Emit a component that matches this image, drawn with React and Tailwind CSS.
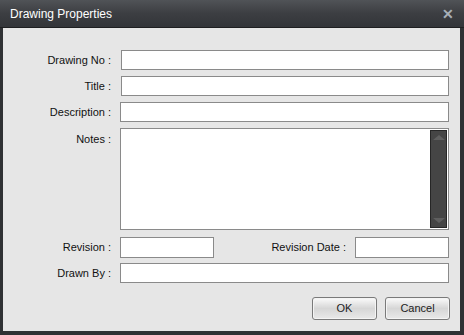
import React from 'react';

const font = { fontFamily: '"Liberation Sans", Arial, sans-serif' };

function Field({ className = '' }) {
  return <div className={`h-[20px] bg-white border border-[#8a8a8a] ${className}`} />;
}

function Label({ children, className = '' }) {
  return <div className={`w-[117px] pr-[9px] text-right text-[11px] text-[#111] ${className}`}>{children}</div>;
}

function Btn({ children }) {
  return (
    <button className="w-[65px] h-[23px] rounded-[3px] border border-[#7a7a7a] bg-gradient-to-b from-[#fbfbfb] via-[#d6d6d6] to-[#e9e9e9] text-[11px] text-[#222] shadow-[inset_0_0_0_1px_#f4f4f4]">
      {children}
    </button>
  );
}

export default function App() {
  return (
    <div className="w-[464px] h-[335px] flex flex-col bg-[#2f3134]" style={font}>
      {/* title bar */}
      <div className="h-[28px] shrink-0 flex items-center justify-between pl-[10px] pr-[10px] bg-gradient-to-b from-[#505357] via-[#3c3e42] to-[#333539] border-b border-[#1e1f21]">
        <span className="text-[12px] text-white pt-[1px]">Drawing Properties</span>
        <span className="text-[14px] font-bold text-[#a7afb6] leading-none">✕</span>
      </div>

      {/* body */}
      <div className="flex-1 ml-[3px] mr-[4px] mb-[4px] bg-[#e6e6e6] flex flex-col pt-[22px]">
        <div className="flex items-center">
          <Label>Drawing No :</Label>
          <Field className="w-[328px] ml-[1px]" />
        </div>
        <div className="flex items-center mt-[6px]">
          <Label>Title :</Label>
          <Field className="w-[328px] ml-[1px]" />
        </div>
        <div className="flex items-center mt-[6px]">
          <Label>Description :</Label>
          <Field className="w-[329px]" />
        </div>
        <div className="flex items-start mt-[6px]">
          <Label className="pt-[3px]">Notes :</Label>
          <div className="w-[329px] h-[102px] bg-white border border-[#8a8a8a] flex justify-end p-[1px]">
            <div className="w-[17px] h-full bg-[#454545] border border-[#262626] flex flex-col items-center justify-between py-[4px]">
              <div className="w-0 h-0 border-l-[6px] border-r-[6px] border-b-[5px] border-l-transparent border-r-transparent border-b-[#5f5f5f]" />
              <div className="w-0 h-0 border-l-[6px] border-r-[6px] border-t-[5px] border-l-transparent border-r-transparent border-t-[#5f5f5f]" />
            </div>
          </div>
        </div>
        <div className="flex items-center mt-[7px]">
          <Label>Revision :</Label>
          <Field className="w-[94px] h-[21px]" />
          <div className="flex-1 text-right pr-[9px] text-[11px] text-[#111]">Revision Date :</div>
          <Field className="w-[94px] h-[21px] mr-[11px]" />
        </div>
        <div className="flex items-center mt-[5px]">
          <Label>Drawn By :</Label>
          <Field className="w-[329px]" />
        </div>
        <div className="flex justify-end gap-[8px] mt-[14px] pr-[10px]">
          <Btn>OK</Btn>
          <Btn>Cancel</Btn>
        </div>
      </div>
    </div>
  );
}
